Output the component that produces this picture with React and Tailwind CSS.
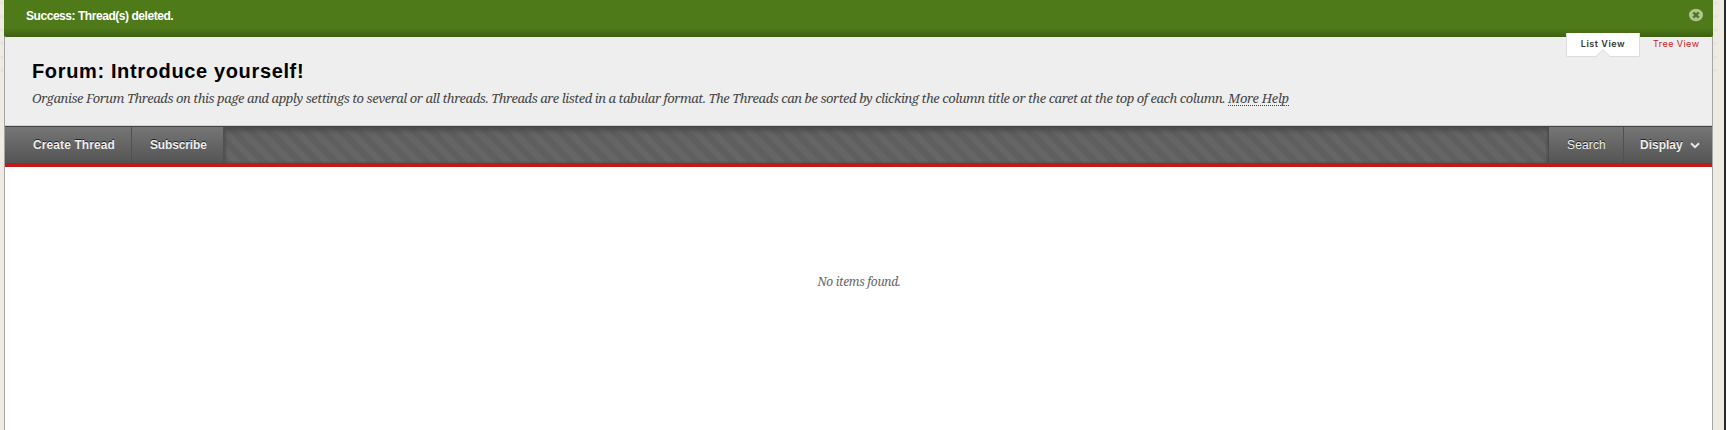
const caps = "font-['Liberation_Sans',Arial,sans-serif]";

function Texture({ id }) {
  return (
    <svg className="block h-full w-full" aria-hidden="true">
      <defs>
        <pattern id={id} width="14" height="13.5" patternUnits="userSpaceOnUse">
          <path d="M0 3h5M2 1v4" stroke="#e6e3da" strokeWidth="1.5" />
        </pattern>
      </defs>
      <rect width="100%" height="75" fill={`url(#${id})`} />
    </svg>
  );
}

function Notice() {
  return (
    <div className="relative z-10 -mx-px flex h-[37px] items-start justify-between rounded-b-xs bg-[#4f7a19] bg-linear-to-t from-[#3e6012] to-[#4f7a19] to-[9px] pl-[22px] pr-[10px]">
      <span className="pt-[8px] text-[12px] leading-4 font-bold tracking-[-0.45px] whitespace-nowrap text-white">Success: Thread(s) deleted.</span>
      <svg className="mt-[8px] h-[14px] w-[14px]" viewBox="0 0 14 14">
        <ellipse cx="7" cy="7" rx="7" ry="6.2" fill="#b0c594" />
        <path d="M4.3 4.3l5.4 5.4M9.7 4.3l-5.4 5.4" stroke="#4f7a19" strokeWidth="2.4" />
      </svg>
    </div>
  );
}

function Tabs() {
  return (
    <div className="absolute top-[-4px] right-0 z-20 flex h-6 font-['Inter',sans-serif] text-[9px] leading-3">
      <div className="relative flex w-[74px] justify-center rounded-b-xs border border-t-0 border-[#dcdcdc] bg-white pt-[5px] font-semibold text-[#333]">
        <span className="tracking-[0.55px] whitespace-nowrap">List View</span>
        <svg className="absolute bottom-[-1px] left-[29px] h-[8px] w-[14px]" viewBox="0 0 14 8">
          <path d="M0 8L7 1L14 8Z" fill="#eeeeee" />
          <path d="M0 7.5L7 .8L14 7.5" fill="none" stroke="#d5d5d5" />
        </svg>
      </div>
      <span className="w-[72px] pt-[5px] pl-[13px] tracking-[0.45px] whitespace-nowrap text-[#c41a1a]">Tree View</span>
    </div>
  );
}

function Header() {
  return (
    <header className="relative h-[89px] border-b border-[#d0d0d0] bg-[#eeeeee] pl-[27px]">
      <Tabs />
      <h1 className="pt-[21px] text-[20px] leading-[26px] font-bold tracking-[0.64px] whitespace-nowrap text-black">Forum: Introduce yourself!</h1>
      <p className="pt-[5px] font-['Noto_Serif','Liberation_Serif',serif] text-[13px] leading-[18px] tracking-[-0.426px] whitespace-nowrap text-[#444] italic">
        <span>Organise Forum Threads on this page and apply settings to several or all threads. Threads are listed in a tabular format. The Threads can be sorted by clicking the column title or the caret at the top of each column. </span>
        <a className="inline-block h-[17px] border-b border-dotted border-[#444] tracking-[-0.3px]">More Help</a>
      </p>
    </header>
  );
}

const btn = "flex h-full items-center border-r border-[#505050] bg-linear-to-b from-[#767676] to-[#545454] text-[12px] font-bold whitespace-nowrap text-[#eeeeee] [text-shadow:0_-1px_0_#222]";

function Toolbar() {
  return (
    <nav className="flex h-[41px] border-t border-b-4 border-t-[#444] border-b-[#c2191b]">
      <div className={`${btn} w-[127px] pl-[28px]`}><span className="tracking-[0.1px]">Create Thread</span></div>
      <div className={`${btn} w-[92px] pl-[18px]`}><span className="tracking-[-0.15px]">Subscribe</span></div>
      <div className="flex-1 bg-[repeating-linear-gradient(45deg,#5f5f5f_0px,#5f5f5f_6.4px,#656565_6.4px,#656565_12.8px)] shadow-[inset_0_5px_6px_-2px_#484848,inset_-2px_0_3px_-1px_#444,inset_2px_0_3px_-1px_#505050]" />
      <div className={`${btn} w-[75px] pl-[18px]`}><span className="font-normal tracking-[0.15px]">Search</span></div>
      <div className={`${btn} w-[88px] border-r-0 pl-[16px]`}>
        Display
        <svg className="ml-[7px] h-[7px] w-[10px]" viewBox="0 0 10 7">
          <path d="M1 1.2l4 4l4-4" fill="none" stroke="#e8e8e8" strokeWidth="2" />
        </svg>
      </div>
    </nav>
  );
}

export default function App() {
  return (
    <div className={`${caps} flex h-[430px] w-[1726px] overflow-hidden bg-[#edebe2]`}>
      <div className="h-full w-1"><Texture id="weave-left" /></div>
      <main className="h-full w-[1709px] border-x border-[#a5a5a5] bg-white">
        <Notice />
        <Header />
        <Toolbar />
        <p className="pt-[106px] pl-px text-center font-['Noto_Serif','Liberation_Serif',serif] text-[12px] leading-[18px] tracking-[-0.3px] text-[#666] italic">No items found.</p>
      </main>
      <div className="h-full w-[11px]"><Texture id="weave-right" /></div>
      <div className="h-full w-[2px] bg-[#28282a]" />
    </div>
  );
}
